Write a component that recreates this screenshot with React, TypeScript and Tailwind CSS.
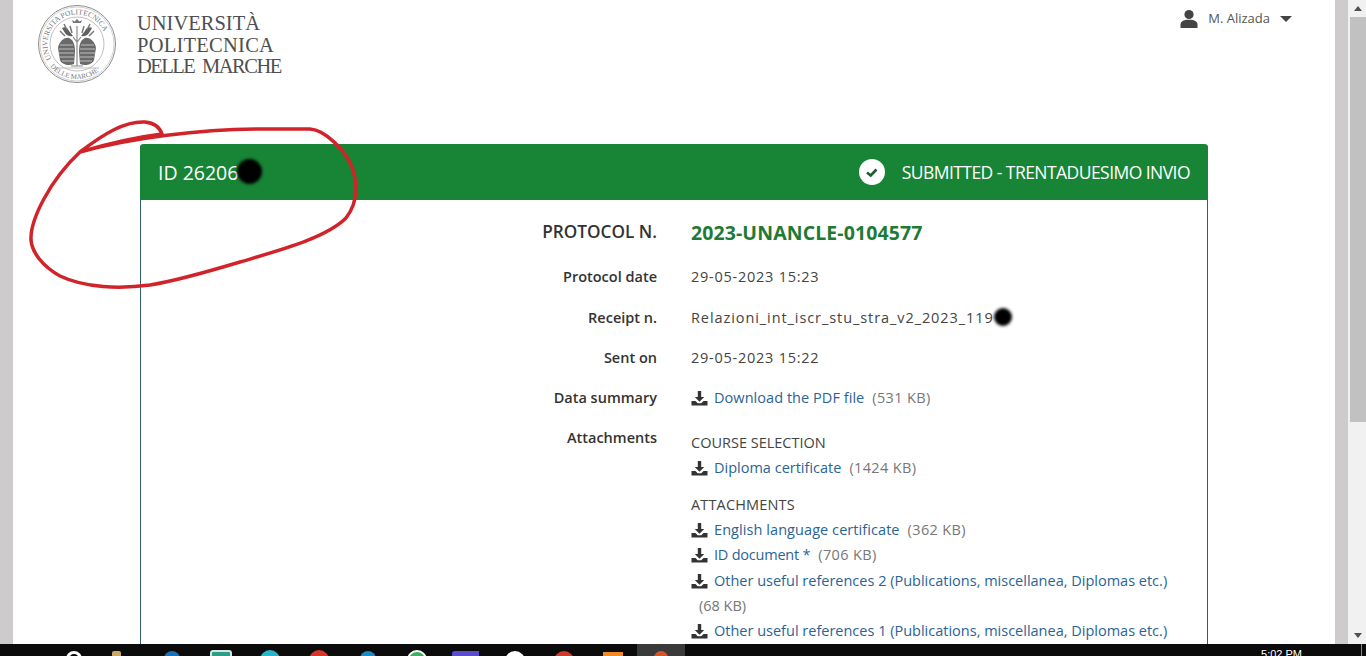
import type { ReactNode } from 'react';

const font = "font-['Open_Sans',sans-serif]";

const Seal = () => (
  <svg width="80" height="80" viewBox="0 0 80 80" className="shrink-0">
    <circle cx="40" cy="40" r="38.5" fill="#fff" stroke="#8d8d8d" strokeWidth="1" />
    <circle cx="40" cy="40" r="37" fill="none" stroke="#b5b5b5" strokeWidth="0.6" />
    <circle cx="40" cy="40" r="27" fill="none" stroke="#a5a5a5" strokeWidth="0.7" />
    <defs>
      <path id="sealTop" d="M14.5 54.75 A29.5 29.5 0 1 1 65.5 54.75" />
      <path id="sealBottom" d="M13.2 62.5 A35 35 0 0 0 66.8 62.5" />
    </defs>
    <text fontFamily="Liberation Serif, serif" fontSize="7.5" fill="#777">
      <textPath href="#sealTop">UNIVERSITA POLITECNICA</textPath>
    </text>
    <text fontFamily="Liberation Serif, serif" fontSize="7" fill="#777">
      <textPath href="#sealBottom">DELLE MARCHE</textPath>
    </text>
    {/* branches and crown */}
    <path d="M36 19h8l1-3-2.500 1.500L40 15l-2.500 2.500L35 16z" fill="#777" />
    <path d="M25 24c3-2 6 0 7 3l4 5c-3 1-7-1-8-3zM55 24c-3-2-6 0-7 3l-4 5c3 1 7-1 8-3z" fill="#5f5f5f" />
    <path d="M23 27l5 5M27 20l3 6M33 22l2 7M57 27l-5 5M53 20l-3 6M47 22l-2 7" stroke="#777" strokeWidth="1.500" />
    {/* lobes */}
    <path d="M21 44c1-6 6-11 11-10 5 2 6 8 6 14l-1 12c-5 2-12 1-14-4z" fill="#696969" />
    <path d="M59 44c-1-6-6-11-11-10-5 2-6 8-6 14l1 12c5 2 12 1 14-4z" fill="#696969" />
    <path d="M23 41h13M22 45h15M22 49h15M23 53h14M25 57h12M44 41h13M43 45h15M43 49h15M43 53h14M43 57h12" stroke="#c8c8c8" strokeWidth="0.9" />
    {/* trunk */}
    <path d="M40 22v40M36 33l4 5 4-5M34 62h12" stroke="#8a8a8a" strokeWidth="1.200" fill="none" />
    <path d="M18 64h44" stroke="#a5a5a5" strokeWidth="0.7" />
  </svg>
);

const DownloadIcon = () => (
  <svg width="17" height="16" viewBox="0 0 17 16" className="shrink-0">
    <path d="M6.800 1h3.400v6h3l-4.700 4.800L3.800 7h3z" fill="#333" />
    <path d="M0.500 11h4l2.200 2.200h3.600L12.500 11h4v4.500H0.500z" fill="#333" />
  </svg>
);

const FileLink = ({ name, size, nameClass }: { name: string; size: string; nameClass?: string }) => (
  <div className="flex h-[25.6px] items-center">
    <DownloadIcon />
    <a className={`ml-[6px] text-[#2a6496] ${nameClass ?? ''}`}>{name}</a>
    <span className="ml-2 tracking-[0.35px] text-[#777]">({size})</span>
  </div>
);

const Row = ({ label, children }: { label: string; children: ReactNode }) => (
  <div className="flex h-[40.3px] items-center">
    <div className="w-[517px] pr-[1px] text-right font-semibold text-[#333]">{label}</div>
    <div className="ml-[33px] flex items-center text-[#444]">{children}</div>
  </div>
);

const Blot = ({ className }: { className: string }) => (
  <span className={`absolute rounded-full bg-black blur-[1.5px] ${className}`} />
);

export default function App() {
  return (
    <div className={`relative h-[656px] w-[1366px] overflow-hidden bg-white text-[14.5px] ${font}`}>
      <div className="flex h-[644px]">
        <div className="w-[13px] shrink-0 bg-[#cdcbcb]" />

        <main className="relative flex-1 overflow-hidden">
          <header className="flex h-[144px] items-start justify-between">
            <div className="ml-[24px] mt-[4px] flex">
              <Seal />
              <div className="ml-[20px] mt-[9px] font-['Liberation_Serif',serif] text-[20.5px] leading-[21.6px] text-[#4f4f4f]">
                <div>UNIVERSITÀ</div>
                <div className="tracking-[0.25px]">POLITECNICA</div>
                <div className="tracking-[-1.5px] [word-spacing:4px]">DELLE MARCHE</div>
              </div>
            </div>
            <div className="mr-[43px] mt-[9px] flex items-center text-[13px] text-[#555]">
              <svg width="18" height="20" viewBox="0 0 18 20">
                <circle cx="9" cy="5.500" r="4.600" fill="#444" />
                <path d="M0.500 19v-3.500c0-3 3-4.800 8.500-4.800s8.500 1.800 8.500 4.800V19z" fill="#444" />
              </svg>
              <span className="ml-[10px]">M. Alizada</span>
              <span className="ml-[10px] h-0 w-0 border-x-[6px] border-t-[6px] border-x-transparent border-t-[#444]" />
            </div>
          </header>

          <section className="ml-[127px] w-[1068px] rounded-t-[4px] border-x border-[#2f5f6a] pb-[30px]">
            <div className="-mx-px flex h-[56px] items-center justify-between rounded-t-[4px] bg-[#188436] px-[18px] pt-[1px] text-white">
              <div className="relative text-[19.5px]">
                ID 26206
                <Blot className="left-[79px] top-[1px] h-[25px] w-[25px]" />
              </div>
              <div className="flex items-center text-[17.5px] tracking-[-0.55px]">
                <svg width="26" height="26" viewBox="0 0 26 26" className="mr-[17px] -mt-[1px]">
                  <circle cx="13" cy="13" r="13" fill="#fff" />
                  <path d="M8 13.500l3.700 3 5.800-6" fill="none" stroke="#1d5c30" strokeWidth="2.600" />
                </svg>
                SUBMITTED - TRENTADUESIMO INVIO
              </div>
            </div>

            <div className="pt-[12px]">
              <div className="mb-[4px] flex h-[41px] items-center">
                <div className="mb-[2px] w-[517px] pr-[1px] text-right text-[17.2px] font-semibold text-[#333]">PROTOCOL N.</div>
                <div className="ml-[33px] text-[19.5px] font-bold tracking-[0.1px] text-[#1f7a34]">2023-UNANCLE-0104577</div>
              </div>
              <Row label="Protocol date"><span className="tracking-[0.75px]">29-05-2023 15:23</span></Row>
              <Row label="Receipt n.">
                <span className="relative tracking-[0.92px]">
                  Relazioni_int_iscr_stu_stra_v2_2023_119
                  <Blot className="-right-[18px] top-[1px] h-[18px] w-[18px]" />
                </span>
              </Row>
              <Row label="Sent on"><span className="tracking-[0.75px]">29-05-2023 15:22</span></Row>
              <Row label="Data summary">
                <DownloadIcon />
                <a className="ml-[6px] tracking-[0.05px] text-[#2a6496]">Download the PDF file</a>
                <span className="ml-2 tracking-[0.35px] text-[#777]">(531 KB)</span>
              </Row>

              <div className="flex pt-[9px]">
                <div className="w-[517px] pr-[1px] text-right font-semibold text-[#333]">Attachments</div>
                <div className="ml-[33px] text-[#444]">
                  <div className="mb-[2px] mt-[6px] leading-[20px]">COURSE SELECTION</div>
                  <FileLink name="Diploma certificate" size="1424 KB" />
                  <div className="mt-[12px] leading-[24px] tracking-[0.15px]">ATTACHMENTS</div>
                  <FileLink name="English language certificate" size="362 KB" nameClass="tracking-[0.07px]" />
                  <FileLink name="ID document *" size="706 KB" nameClass="tracking-[-0.22px]" />
                  <div className="flex h-[25.6px] items-center">
                    <DownloadIcon />
                    <a className="ml-[6px] text-[#2a6496]">Other useful references 2 (Publications, miscellanea, Diplomas etc.)</a>
                  </div>
                  <div className="flex h-[25px] items-center pl-[8px] text-[#777]">(68 KB)</div>
                  <div className="flex h-[25.6px] items-center">
                    <DownloadIcon />
                    <a className="ml-[6px] text-[#2a6496]">Other useful references 1 (Publications, miscellanea, Diplomas etc.)</a>
                  </div>
                </div>
              </div>
            </div>
          </section>
        </main>

        <div className="w-[13px] shrink-0 bg-[#cdcbcb]" />
        <div className="w-[2px] shrink-0 bg-[#f1f1f1]" />
        <div className="flex w-[16px] shrink-0 flex-col bg-[#f1f1f1]">
          <div className="flex h-[17px] items-center justify-center">
            <span className="h-0 w-0 border-x-[4px] border-b-[5px] border-x-transparent border-b-[#505050]" />
          </div>
          <div className="h-[405px] bg-[#c1c1c1]" />
          <div className="flex-1" />
          <div className="flex h-[17px] items-center justify-center">
            <span className="h-0 w-0 border-x-[4px] border-t-[5px] border-x-transparent border-t-[#505050]" />
          </div>
        </div>
      </div>

      <footer className="flex h-[12px] items-start overflow-hidden bg-[#0b0b0b]">
        <div className="ml-[49px] flex h-full">
          <div className="flex w-[49px] justify-center pt-[7px]"><span className="h-[16px] w-[16px] rounded-full border-[3px] border-white" /></div>
          <div className="flex w-[49px] justify-center pr-[12px] pt-[7px]"><span className="h-[10px] w-[9px] rounded-t-[2px] bg-[#c9a860]" /></div>
          <div className="flex w-[49px] justify-center pt-[7px]"><span className="h-[16px] w-[16px] rounded-full bg-[#1d6fb8]" /></div>
          <div className="flex w-[49px] justify-center pt-[6px]"><span className="h-[16px] w-[22px] rounded-t-[3px] border-2 border-[#cfe8e0] bg-[#2f9c85]" /></div>
          <div className="flex w-[49px] justify-center pt-[6px]"><span className="h-[20px] w-[20px] rounded-full bg-[#27b5c8]" /></div>
          <div className="flex w-[49px] justify-center pt-[6px]"><span className="h-[20px] w-[20px] rounded-full bg-[#d8352a]" /></div>
          <div className="flex w-[49px] justify-center pt-[7px]"><span className="h-[16px] w-[16px] rounded-full bg-[#1e88c0]" /></div>
          <div className="flex w-[49px] justify-center pt-[6px]"><span className="h-[20px] w-[20px] rounded-full border-2 border-white bg-[#3fae62]" /></div>
          <div className="flex w-[49px] justify-center pt-[7px]"><span className="h-[12px] w-[27px] rounded-tl-[3px] bg-[#5b4bd0]" /></div>
          <div className="flex w-[49px] justify-center pt-[7px]"><span className="h-[20px] w-[20px] rounded-full bg-white" /></div>
          <div className="flex w-[49px] justify-center pt-[7px]"><span className="h-[20px] w-[20px] rounded-full bg-[#d0392b]" /></div>
          <div className="flex w-[49px] justify-center pt-[8px]"><span className="h-[12px] w-[20px] bg-[#f08a24]" /></div>
          <div className="flex w-[48px] justify-center bg-[#3a3a3a] pt-[7px]"><span className="h-[14px] w-[14px] rounded-full bg-[#d9532a]" /></div>
        </div>
        <div className="ml-auto flex h-full">
          <div className="mr-[59px] pt-[4px] font-['Liberation_Sans',sans-serif] text-[11px] leading-[12px] text-white">5:02 PM</div>
          <div className="mr-[4px] w-px bg-[#888]" />
        </div>
      </footer>

      <svg width="340" height="175" viewBox="25 118 340 175" className="pointer-events-none absolute left-[25px] top-[118px]">
        <path
          d="M80 152 C105 133 125 121 145 122 C155 123 160 128 162 134 C130 138 100 146 80 152 C130 138 200 129 265 129 L310 129 C325 130 346 150 353 170 C359 190 356 205 346 218 C326 238 280 250 240 262 C210 271 175 281 150 285 C120 289 85 288 60 276 C42 266 32 252 31 240 C30 220 50 180 80 152 Z"
          fill="none"
          stroke="#d1232a"
          strokeWidth="3.500"
          strokeLinejoin="round"
        />
      </svg>
    </div>
  );
}
